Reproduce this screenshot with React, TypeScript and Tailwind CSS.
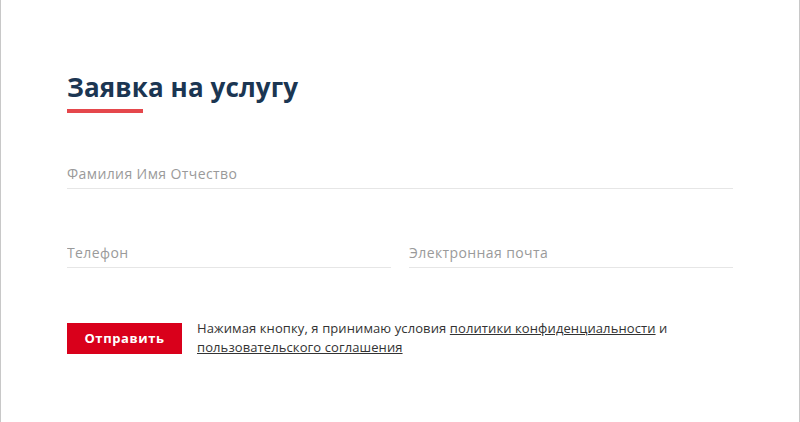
export default function App() {
  const inputCls =
    'w-full bg-transparent text-[14px] leading-[20px] tracking-[0.4px] text-[#333] outline-none placeholder:text-[#9a9a9a]';
  return (
    <div
      className="min-h-[422px] w-full border-x border-[#c8c8c8] bg-white"
      style={{ fontFamily: '"Open Sans", "Noto Sans", sans-serif' }}
    >
      <div className="px-[66px] pt-[70px] pb-[60px]">
        <h2 className="text-[26px] font-bold leading-[34px] tracking-[0.1px] text-[#1b3652]">
          Заявка на услугу
        </h2>
        <div className="mt-[5px] h-[4px] w-[76px] bg-[#e5474c]" />

        <div className="mt-[48px] flex flex-col gap-[51px]">
          <label className="block border-b border-[#e6e6e6] pb-[3px]">
            <input placeholder="Фамилия Имя Отчество" className={inputCls} />
          </label>
          <div className="grid grid-cols-2 gap-[18px]">
            <label className="block border-b border-[#e6e6e6] pb-[3px]">
              <input placeholder="Телефон" className={inputCls} />
            </label>
            <label className="block border-b border-[#e6e6e6] pb-[3px]">
              <input placeholder="Электронная почта" className={inputCls} />
            </label>
          </div>
        </div>

        <div className="mt-[55px] flex items-start gap-[15px]">
          <button className="h-[31px] w-[115px] shrink-0 bg-[#d9001b] text-[13px] font-bold tracking-[0.6px] text-white">
            Отправить
          </button>
          <p className="-mt-[4px] max-w-[480px] text-[13px] leading-[19px] tracking-[0.1px] text-[#333]">
            Нажимая кнопку, я принимаю условия{' '}
            <a href="#" className="underline">политики конфиденциальности</a> и{' '}
            <a href="#" className="underline">пользовательского соглашения</a>
          </p>
        </div>
      </div>
    </div>
  );
}
